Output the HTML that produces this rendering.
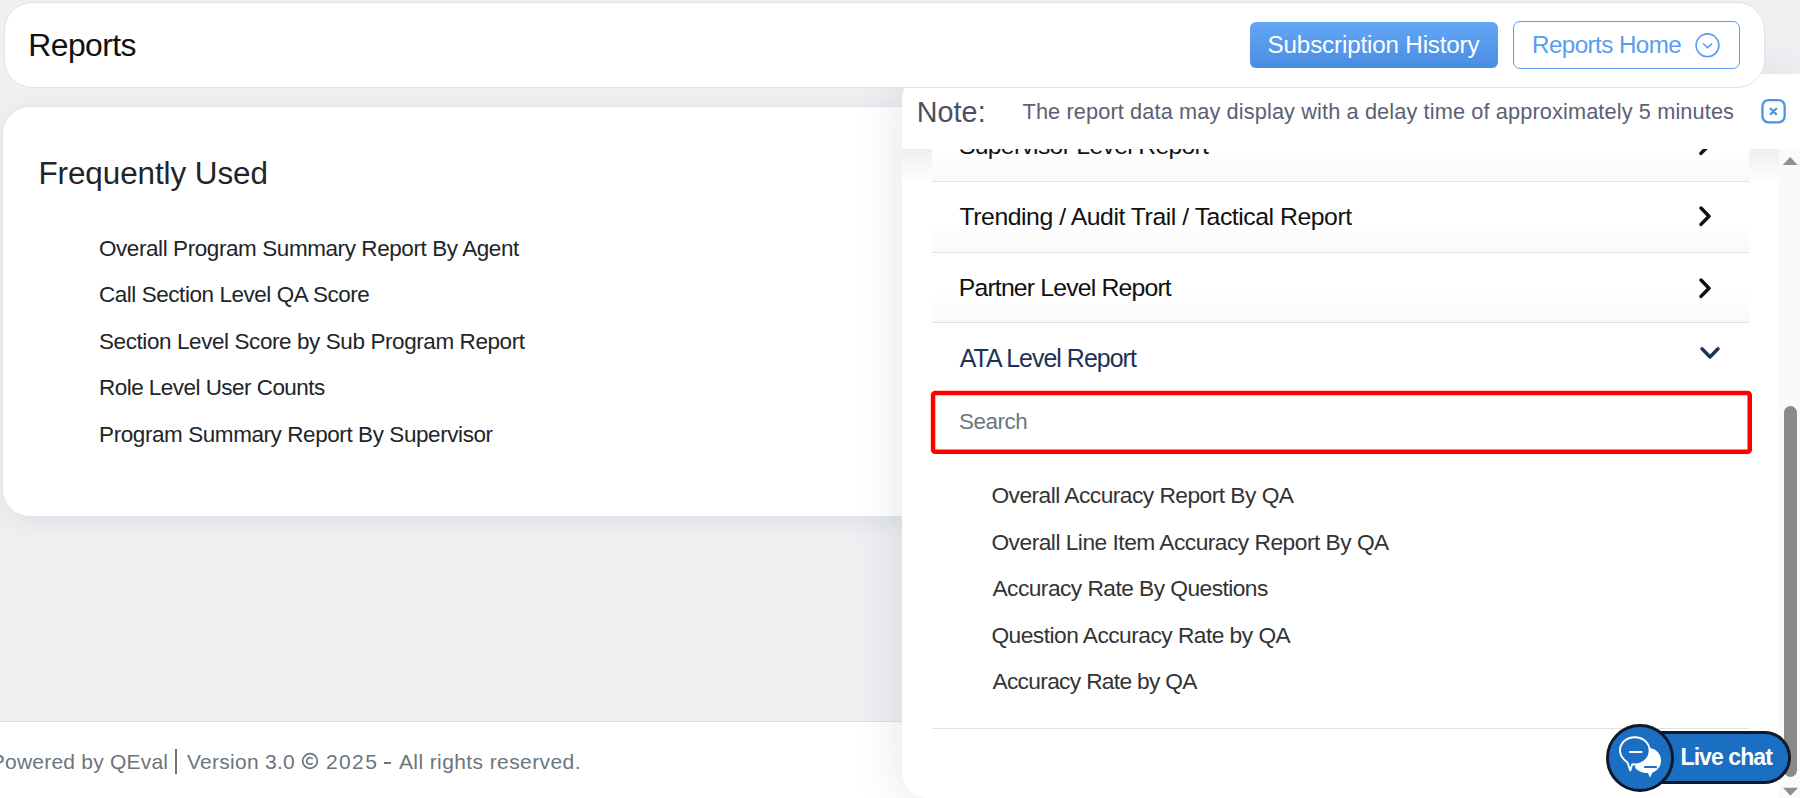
<!DOCTYPE html>
<html><head><meta charset="utf-8">
<style>
*{box-sizing:border-box;margin:0;padding:0}
html,body{width:1800px;height:798px;overflow:hidden;background:#eff0f2;font-family:"Liberation Sans",sans-serif;}
.abs{position:absolute}
.t{position:absolute;line-height:1;white-space:nowrap}
#hdr{left:4px;top:2px;width:1761px;height:86px;background:#fff;border:1px solid #dfe2e6;border-radius:28px;z-index:5}
#freq{left:2px;top:106px;width:1200px;height:410.5px;background:#fff;border:1px solid #e4e7eb;border-radius:28px;box-shadow:0 6px 24px rgba(30,40,60,.07);}
#foot{left:0;top:721px;width:1800px;height:77px;background:#fff;border-top:1px solid #dfe2e6}
#panel{left:902px;top:74px;width:900px;height:724px;background:#fff;border-radius:25px 0 0 25px;box-shadow:-8px 0 44px rgba(55,85,120,.12);z-index:3;overflow:hidden}
.row{left:30px;width:817px;background:linear-gradient(#fff 55%,#f9f9fa);border-bottom:1px solid #dee2e6}
</style></head><body>
<div id="hdr" class="abs"></div>
<div class="t" style="left:28.30px;top:29.81px;font-size:31.88px;color:#111;letter-spacing:-0.579px;z-index:6">Reports</div>
<div class="abs" style="left:1250px;top:22px;width:248px;height:45.5px;border-radius:6px;background:linear-gradient(#64a6f6,#4a8ce0);z-index:6"></div>
<div class="t" style="left:1267.61px;top:33.11px;font-size:24.20px;color:#fff;letter-spacing:-0.162px;z-index:7">Subscription History</div>
<div class="abs" style="left:1513px;top:21px;width:226.5px;height:47.5px;border-radius:7px;border:1px solid #5c9df0;z-index:6"></div>
<div class="t" style="left:1532.02px;top:33.31px;font-size:24.20px;color:#5a9cf0;letter-spacing:-0.560px;z-index:7">Reports Home</div>
<svg class="abs" style="left:1692px;top:30px;z-index:7" width="31" height="31" viewBox="0 0 31 31"><circle cx="15.5" cy="15.3" r="11.4" fill="none" stroke="#5a9cf0" stroke-width="1.6"/><path d="M11 13.5 L15.5 17.6 L20 13.5" fill="none" stroke="#5a9cf0" stroke-width="1.6"/></svg>
<div id="freq" class="abs"></div>
<div class="t" style="left:38.43px;top:158.18px;font-size:31.45px;color:#212529;letter-spacing:-0.080px">Frequently Used</div>
<div class="t" style="left:98.95px;top:237.78px;font-size:22.46px;color:#212529;letter-spacing:-0.400px">Overall Program Summary Report By Agent</div>
<div class="t" style="left:98.88px;top:283.78px;font-size:22.46px;color:#212529;letter-spacing:-0.426px">Call Section Level QA Score</div>
<div class="t" style="left:98.99px;top:330.78px;font-size:22.46px;color:#212529;letter-spacing:-0.395px">Section Level Score by Sub Program Report</div>
<div class="t" style="left:99.07px;top:376.78px;font-size:22.46px;color:#212529;letter-spacing:-0.522px">Role Level User Counts</div>
<div class="t" style="left:99.07px;top:423.78px;font-size:22.46px;color:#212529;letter-spacing:-0.401px">Program Summary Report By Supervisor</div>
<div id="foot" class="abs"></div>
<div class="t" style="left:-9.22px;top:750.91px;font-size:21.01px;color:#6c757d;letter-spacing:0.219px">Powered by QEval</div>
<div class="abs" style="left:175.3px;top:749px;width:1.9px;height:25px;background:#6c757d"></div>
<div class="t" style="left:186.89px;top:750.91px;font-size:21.01px;color:#6c757d;letter-spacing:0.280px">Version 3.0</div>
<svg class="abs" style="left:300px;top:751px" width="20" height="20" viewBox="0 0 20 20"><circle cx="10" cy="10" r="7.3" fill="none" stroke="#6c757d" stroke-width="1.7"/><path d="M12.6 8.1 A3.3 3.3 0 1 0 12.6 11.9" fill="none" stroke="#6c757d" stroke-width="1.7"/></svg>
<div class="t" style="left:325.95px;top:750.91px;font-size:21.01px;color:#6c757d;letter-spacing:1.401px">2025</div>
<div class="abs" style="left:383.5px;top:762px;width:7.5px;height:1.6px;background:#6c757d"></div>
<div class="t" style="left:398.96px;top:750.91px;font-size:21.01px;color:#6c757d;letter-spacing:0.401px">All rights reserved.</div>
<div id="panel" class="abs"></div>
<div class="t" style="left:916.66px;top:97.51px;font-size:28.70px;color:#4a4f63;letter-spacing:0.098px;z-index:6">Note:</div>
<div class="t" style="left:1022.53px;top:101.40px;font-size:21.74px;color:#5b6074;letter-spacing:0.118px;z-index:6">The report data may display with a delay time of approximately 5 minutes</div>
<svg class="abs" style="left:1755px;top:93px;z-index:6" width="38" height="38" viewBox="0 0 38 38"><rect x="7.45" y="7.15" width="22.2" height="22.2" rx="6" fill="none" stroke="#4b93e8" stroke-width="2.3"/><path d="M15.7 15.75 L21.1 21.1 M21.1 15.75 L15.7 21.1" stroke="#4b93e8" stroke-width="2.3" stroke-linecap="round"/></svg>
<div id="scroll" class="abs" style="left:902px;top:149px;width:898px;height:649px;overflow:hidden;z-index:4">
<div class="abs" style="left:0;top:0;width:30px;height:34px;background:linear-gradient(#efefef,#fff)"></div>
<div class="abs" style="left:847px;top:0;width:30px;height:34px;background:linear-gradient(#efefef,#fff)"></div>
<div class="row abs" style="top:-38px;height:71px"></div>
<div class="t" style="left:56.88px;top:-14.88px;font-size:24.78px;color:#111;letter-spacing:-0.707px">Supervisor Level Report</div>
<div class="row abs" style="top:33px;height:71px"></div>
<div class="t" style="left:57.56px;top:55.82px;font-size:24.78px;color:#111;letter-spacing:-0.452px">Trending / Audit Trail / Tactical Report</div>
<div class="row abs" style="top:104px;height:70px"></div>
<div class="t" style="left:56.78px;top:126.82px;font-size:24.78px;color:#111;letter-spacing:-0.820px">Partner Level Report</div>
<div class="t" style="left:57.76px;top:196.70px;font-size:24.93px;color:#1c3258;letter-spacing:-0.970px">ATA Level Report</div>
<svg class="abs" style="left:27.5px;top:241px" width="826" height="67" viewBox="0 0 826 67"><rect x="3.05" y="3.05" width="816.7" height="58.8" rx="2.2" fill="#fff" stroke="#ff0000" stroke-width="4.5"/></svg>
<div class="t" style="left:56.99px;top:261.98px;font-size:22.46px;color:#6c757d;letter-spacing:-0.500px">Search</div>
<div class="t" style="left:89.44px;top:334.74px;font-size:22.75px;color:#333;letter-spacing:-0.528px">Overall Accuracy Report By QA</div>
<div class="t" style="left:89.44px;top:381.74px;font-size:22.75px;color:#333;letter-spacing:-0.511px">Overall Line Item Accuracy Report By QA</div>
<div class="t" style="left:90.46px;top:428.24px;font-size:22.75px;color:#333;letter-spacing:-0.546px">Accuracy Rate By Questions</div>
<div class="t" style="left:89.44px;top:474.74px;font-size:22.75px;color:#333;letter-spacing:-0.530px">Question Accuracy Rate by QA</div>
<div class="t" style="left:90.46px;top:520.74px;font-size:22.75px;color:#333;letter-spacing:-0.689px">Accuracy Rate by QA</div>
<div class="abs" style="left:30px;top:579px;width:817px;height:1px;background:#dee2e6"></div>
<div class="abs" style="left:877px;top:0;width:21px;height:649px;background:#fafafa"></div>
<svg class="abs" style="left:791px;top:-19px" width="30" height="30" viewBox="0 0 30 30"><path d="M8 7 L16 15.2 L8 23.4" fill="none" stroke="#111" stroke-width="3.5" stroke-linecap="round" stroke-linejoin="round"/></svg>
<svg class="abs" style="left:791px;top:51.5px" width="30" height="30" viewBox="0 0 30 30"><path d="M8 7 L16 15.2 L8 23.4" fill="none" stroke="#111" stroke-width="3.5" stroke-linecap="round" stroke-linejoin="round"/></svg>
<svg class="abs" style="left:791px;top:123.5px" width="30" height="30" viewBox="0 0 30 30"><path d="M8 7 L16 15.2 L8 23.4" fill="none" stroke="#111" stroke-width="3.5" stroke-linecap="round" stroke-linejoin="round"/></svg>
<svg class="abs" style="left:791.5px;top:189px" width="30" height="30" viewBox="0 0 30 30"><path d="M8 10.8 L16 19 L24 10.8" fill="none" stroke="#1c3258" stroke-width="3.4" stroke-linecap="round" stroke-linejoin="round"/></svg>
<div class="abs" style="left:882px;top:256.5px;width:13px;height:371px;border-radius:6.5px;background:#8a8a8a"></div>
<svg class="abs" style="left:877px;top:0" width="21" height="20" viewBox="0 0 21 20"><path d="M3.7 16 L18.7 16 L11.2 8.1 Z" fill="#8f8f8f"/></svg>
<svg class="abs" style="left:877px;top:629px" width="21" height="20" viewBox="0 0 21 20"><path d="M4 9.8 L19 9.8 L11.5 17.8 Z" fill="#8f8f8f"/></svg>
</div>
<div class="abs" style="left:1625px;top:730.5px;width:166px;height:53px;border-radius:27px;background:#1a6fc2;border:3px solid #111827;z-index:9"></div>
<div class="t" style="left:1680.5px;top:746px;font-size:23px;font-weight:bold;color:#fff;z-index:10;letter-spacing:-0.92px">Live chat</div>
<div class="abs" style="left:1606px;top:723.5px;width:68px;height:68px;border-radius:50%;background:#1a6fc2;border:3px solid #111827;z-index:10"></div>
<svg class="abs" style="left:1606px;top:723.5px;z-index:11" width="68" height="68" viewBox="0 0 68 68">
<path d="M29 44 C33 48 38 49.5 42 49 L44 53.5 L46.5 48.5 C52 46.5 55 42 55 36.5 C55 29.5 49.5 24 42.5 24 C38 24 33 27 31 31 Z" fill="#fff"/>
<path d="M39 43 L50 43" stroke="#1a6fc2" stroke-width="2.2" stroke-linecap="round"/>
<path d="M21.5 38.5 C16.5 35 14 31 14 26.5 C14 19 20.5 13.2 28.8 13.2 C37 13.2 43.6 19 43.6 26.8 C43.6 34.5 37 40.5 28.8 40.5 C27.8 40.5 27 40.4 26.2 40.3 L24.3 46.5 Z" fill="#1a6fc2" stroke="#fff" stroke-width="1.9" stroke-linejoin="round"/>
<path d="M24 28 L35.5 28" stroke="#fff" stroke-width="2.2" stroke-linecap="round"/>
</svg>
</body></html>
